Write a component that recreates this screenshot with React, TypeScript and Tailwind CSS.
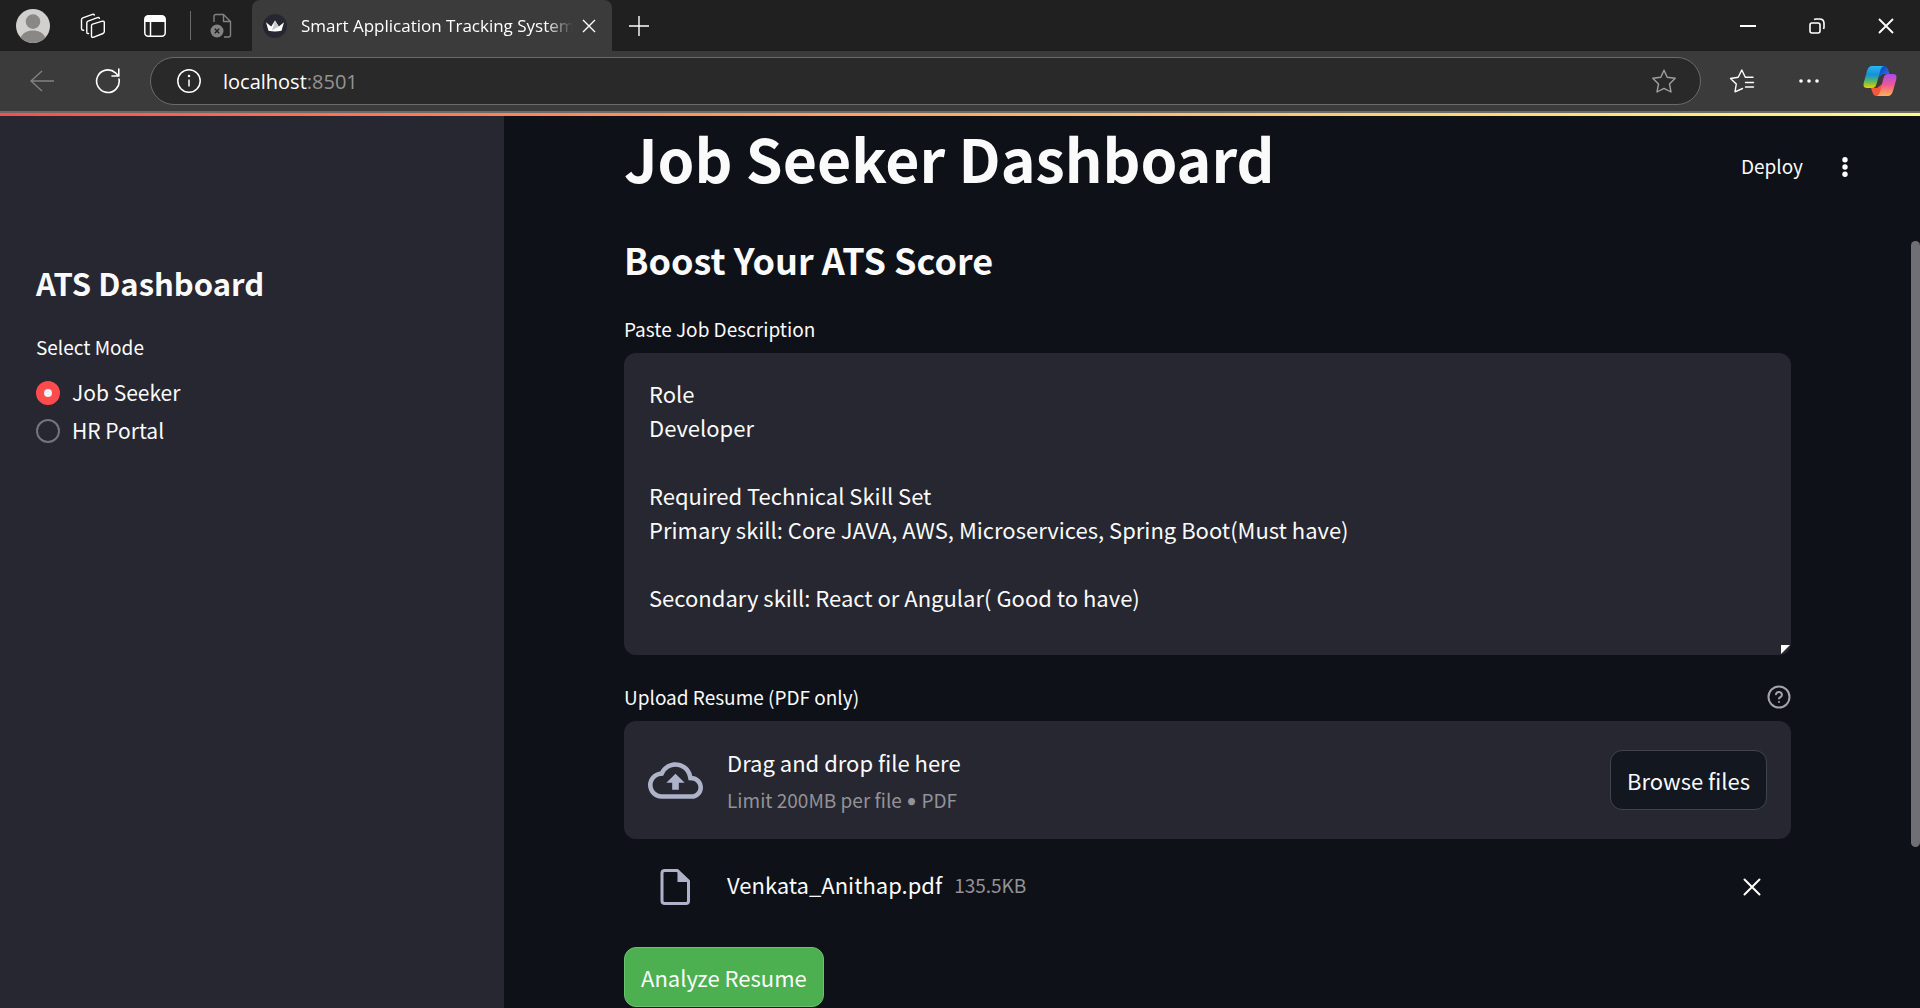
import React from "react";

const ui = "font-['Open_Sans','Noto_Sans',sans-serif]";

function Avatar() {
  return (
    <svg viewBox="0 0 34 34" className="size-[34px]">
      <circle cx="17" cy="17" r="17" fill="#d2d0ce" />
      <circle cx="17" cy="12.600" r="7.300" fill="#8a8886" />
      <path d="M4.500 28.500C7 24 11 21.500 17 21.500S27 24 29.500 28.500A17 17 0 0 1 4.500 28.500Z" fill="#8a8886" />
    </svg>
  );
}

function Workspaces() {
  return (
    <svg viewBox="0 0 26 26" className="size-[26px]" fill="none" stroke="#fff" strokeWidth="1.400" strokeLinejoin="round" strokeLinecap="round">
      <path d="M12.600 11.200 22.400 8.200Q24.300 7.800 24.300 9.600V18.600Q24.300 20 23 20.500L13.200 24.300Q11.500 24.700 11.500 23V12.800Q11.500 11.600 12.600 11.200Z" />
      <path d="M8.600 20.500 7.800 20.600Q6.800 20.400 6.800 19.200V10Q6.800 8.600 8 8.100L17.500 4.600Q19 4.200 19.400 5.400" />
      <path d="M3.700 17.300H3Q1.500 17.200 1.500 15.600V6.800Q1.500 5.400 2.800 4.900L12.500 1.400Q13.800 1.100 14.400 2" />
    </svg>
  );
}

function TabActions() {
  return (
    <svg viewBox="0 0 22 22" className="size-[22px]">
      <rect x=".8" y=".8" width="20.400" height="20.400" rx="3.500" fill="none" stroke="#fff" strokeWidth="1.500" />
      <path d="M.8 7V4Q.8.8 4 .8H18Q21.200.8 21.200 4V7Z" fill="#fff" />
      <path d="M6.500 7V21" stroke="#fff" strokeWidth="1.500" />
    </svg>
  );
}

function DeadPage() {
  return (
    <svg viewBox="0 0 22 26" className="h-[26px] w-[22px]">
      <path d="M4 9V3.500Q4 1.500 6 1.500H13.500L20.500 8.500V22Q20.500 24 18.500 24H14M13.500 1.500V8.500H20.500" fill="none" stroke="#828282" strokeWidth="1.400" strokeLinejoin="round" />
      <circle cx="7" cy="18" r="6.500" fill="#828282" />
      <path d="M4.800 15.800 9.200 20.200M9.200 15.800 4.800 20.200" stroke="#202020" strokeWidth="1.500" />
    </svg>
  );
}

function Crown() {
  return (
    <svg viewBox="0 0 24 24" className="size-6 shrink-0">
      <circle cx="12" cy="12" r="12" fill="#262730" />
      <path d="M3 8.300 8.200 12.400 12 6.500 15.800 12.400 21 8.300 18.500 16.800Q12 18.200 5.500 16.800Z" fill="#fff" />
      <path d="M12 6.500 15.800 12.400 9 16.500Z" fill="#c9c9cc" />
    </svg>
  );
}

function Star() {
  return (
    <svg viewBox="0 0 24 24" className="size-6" fill="none" stroke="#a0a0a0" strokeWidth="1.400" strokeLinejoin="round">
      <path d="M12 1.200 15.200 8.300 23.200 9.300 17.500 15 19 23 12 19.400 5 23 6.500 15 .8 9.300 8.800 8.300Z" />
    </svg>
  );
}

function Favorites() {
  return (
    <svg viewBox="0 0 26 26" className="size-[26px]" fill="none" stroke="#fff" strokeWidth="1.400" strokeLinejoin="round" strokeLinecap="round">
      <path d="M13.500 20.500 6 23.800 7.300 16 1.500 10.500 9.200 9.300 12.800 2 16.300 9.300H24M16.500 14.500H24.500M16.500 19H24.500" />
    </svg>
  );
}

function Copilot() {
  return (
    <svg viewBox="0 0 34 32" className="h-8 w-[34px]">
      <defs>
        <linearGradient id="cpA" x1="0" y1="0" x2="0" y2="1">
          <stop offset="0" stopColor="#2bb4f4" />
          <stop offset=".4" stopColor="#1590d8" />
          <stop offset=".7" stopColor="#5cb860" />
          <stop offset="1" stopColor="#f0d000" />
        </linearGradient>
        <linearGradient id="cpB" x1="0" y1="0" x2="0" y2="1">
          <stop offset="0" stopColor="#a84af0" />
          <stop offset=".5" stopColor="#ef5a90" />
          <stop offset="1" stopColor="#ffb057" />
        </linearGradient>
        <linearGradient id="cpC" x1="0" y1="0" x2="1" y2="1">
          <stop offset="0" stopColor="#0c3bb8" />
          <stop offset="1" stopColor="#2b7cf0" />
        </linearGradient>
      </defs>
      <path d="M16 1H21Q24 1 25 4.500L26.500 9H20L16 12Z" fill="url(#cpC)" />
      <path d="M18 31H14Q10.500 31 9.500 27.500L8 23H14L19 19Z" fill="#f4553b" />
      <path d="M9 1H21Q18.500 1.500 17.500 5L13.500 19Q12.500 23 9 23H4Q-.5 23 .8 17.500L4 6Q5.500 1 9 1Z" fill="url(#cpA)" />
      <path d="M25 9H30Q34.500 9 33.200 14.500L30 26Q28.500 31 25 31H13.500Q16 30.500 17 27L20.500 13Q21.500 9 25 9Z" fill="url(#cpB)" />
    </svg>
  );
}

function TitleBar() {
  return (
    <div className="flex h-[51px] items-stretch bg-[#202020]">
      <div className="flex items-center gap-[38px] pl-4">
        <button aria-label="Profile" className="-mr-2"><Avatar /></button>
        <button aria-label="Workspaces"><Workspaces /></button>
        <button aria-label="Tab actions"><TabActions /></button>
      </div>
      <div className="my-[11px] ml-6 w-px bg-[#6a6a6a]" />
      <button aria-label="Inactive tab" className="ml-[19px] flex items-center"><DeadPage /></button>
      <div className="ml-5 flex w-[360px] items-center rounded-t-lg bg-[#3b3b3b] pr-4 pl-[11px]">
        <Crown />
        <span className={`ml-3.5 shrink-0 text-[17px] whitespace-nowrap text-white [mask-image:linear-gradient(to_right,black_244px,transparent_272px)] ${ui}`}>
          Smart Application Tracking System
        </span>
        <button aria-label="Close tab" className="ml-auto">
          <svg viewBox="0 0 14 14" className="size-3.5" stroke="#fff" strokeWidth="1.400"><path d="M1 1 13 13M13 1 1 13" /></svg>
        </button>
      </div>
      <button aria-label="New tab" className="ml-4">
        <svg viewBox="0 0 22 22" className="size-[22px]" stroke="#fff" strokeWidth="1.400"><path d="M11 1V21M1 11H21" /></svg>
      </button>
      <div className="ml-auto flex items-center gap-[53px] pr-[26px]">
        <button aria-label="Minimize">
          <svg viewBox="0 0 16 16" className="size-4" stroke="#fff" strokeWidth="2"><path d="M0 8H16" /></svg>
        </button>
        <button aria-label="Restore">
          <svg viewBox="0 0 16 16" className="size-4" fill="none" stroke="#fff" strokeWidth="1.600">
            <rect x="1" y="5" width="10" height="10" rx="2" />
            <path d="M5 1.500Q6 1 7 1H10.500Q15 1 15 5.500V9Q15 10 14.500 11" />
          </svg>
        </button>
        <button aria-label="Close window">
          <svg viewBox="0 0 16 16" className="size-4" stroke="#fff" strokeWidth="1.800"><path d="M1 1 15 15M15 1 1 15" /></svg>
        </button>
      </div>
    </div>
  );
}

function AddressBar() {
  return (
    <div className="flex h-[60px] items-center bg-[#3b3b3b] pl-[30px]">
      <button aria-label="Back">
        <svg viewBox="0 0 24 22" className="h-[22px] w-6" fill="none" stroke="#828282" strokeWidth="1.400"><path d="M12 1 1 11 12 21M1 11H24" /></svg>
      </button>
      <button aria-label="Refresh" className="ml-[41px]">
        <svg viewBox="0 0 26 26" className="size-[26px]" fill="none" stroke="#fff" strokeWidth="1.600" strokeLinecap="round">
          <path d="M24 11A11.300 11.300 0 1 1 20.500 4.800L23.500 8M23.800 1V8H17" />
        </svg>
      </button>
      <div className="ml-[29px] flex h-12 flex-1 items-center rounded-full border border-[#6a6a6a] bg-[#292929] pr-6 pl-[26px]">
        <button aria-label="Site information">
          <svg viewBox="0 0 24 24" className="size-6" fill="none" stroke="#fff" strokeWidth="1.500">
            <circle cx="12" cy="12" r="11.200" />
            <path d="M12 10.500V17.500" />
            <circle cx="12" cy="7" r=".5" fill="#fff" />
          </svg>
        </button>
        <span className={`ml-[22px] pt-0.5 text-[20px] text-white ${ui}`}>
          localhost<span className="text-[#949494]">:8501</span>
        </span>
        <button aria-label="Add to favorites" className="ml-auto"><Star /></button>
      </div>
      <div className="flex items-center pr-[23px] pl-7">
        <button aria-label="Favorites"><Favorites /></button>
        <button aria-label="Settings and more" className="ml-11">
          <svg viewBox="0 0 20 4" className="h-1 w-5" fill="#fff"><circle cx="2" cy="2" r="1.800" /><circle cx="10" cy="2" r="1.800" /><circle cx="18" cy="2" r="1.800" /></svg>
        </button>
        <button aria-label="Copilot" className="ml-11"><Copilot /></button>
      </div>
    </div>
  );
}

function ModeOption({ label, checked }: { label: string; checked?: boolean }) {
  return (
    <label className="flex items-center gap-3">
      <input
        type="radio"
        name="mode"
        defaultChecked={checked}
        className="mt-0.5 size-6 appearance-none rounded-full border-2 border-[#74757b] checked:border-8 checked:border-[#ff4b4b] checked:bg-[#f0f2f6]"
      />
      {label}
    </label>
  );
}

function Sidebar() {
  return (
    <aside className="w-[504px] shrink-0 bg-[#262730] px-9 pt-[147px]">
      <h2 className="text-[31px] leading-10 font-semibold">ATS Dashboard</h2>
      <fieldset className="mt-[30px]">
        <legend className="text-[19px] leading-7">Select Mode</legend>
        <div className="mt-3 text-[21px] leading-[38px]">
          <ModeOption label="Job Seeker" checked />
          <ModeOption label="HR Portal" />
        </div>
      </fieldset>
    </aside>
  );
}

const description = `Role
Developer

Required Technical Skill Set
Primary skill: Core JAVA, AWS, Microservices, Spring Boot(Must have)

Secondary skill: React or Angular( Good to have)`;

function Uploader() {
  return (
    <section>
      <div className="mt-7 flex h-7 items-center justify-between text-[19px]">
        <label htmlFor="resume">Upload Resume (PDF only)</label>
        <button aria-label="Help">
          <svg viewBox="0 0 24 24" className="size-6" fill="none" stroke="#a3a4a8" strokeWidth="2" strokeLinecap="round">
            <circle cx="12" cy="12" r="10.500" />
            <path d="M9 9.300A3 3 0 0 1 14.900 10C14.900 12 12 12.600 12 13.600M12 17H12.010" />
          </svg>
        </button>
      </div>
      <div className="mt-2.5 flex h-[118px] items-center rounded-xl bg-[#262730] px-6">
        <svg viewBox="0 0 24 24" className="size-[55px] shrink-0" fill="#afb3c9">
          <path d="M19.350 10.040A7.490 7.490 0 0 0 12 4C9.110 4 6.600 5.640 5.350 8.040A5.994 5.994 0 0 0 0 14c0 3.310 2.690 6 6 6h13c2.760 0 5-2.240 5-5 0-2.640-2.050-4.780-4.650-4.960zM19 18H6c-2.210 0-4-1.790-4-4 0-2.050 1.530-3.760 3.560-3.970l1.070-.11.500-.95A5.469 5.469 0 0 1 12 6c2.620 0 4.880 1.860 5.390 4.430l.3 1.500 1.530.11A2.980 2.980 0 0 1 22 15c0 1.650-1.350 3-3 3zM8 13h2.550v3h2.900v-3H16l-4-4z" />
        </svg>
        <div className="ml-6 pt-[3px]">
          <div className="text-[22px] leading-[38px]">Drag and drop file here</div>
          <div className="text-[19px] leading-[38px] text-[#929297]">
            Limit 200MB per file <span className="font-['Lato',sans-serif]">•</span> PDF
          </div>
        </div>
        <input id="resume" type="file" className="hidden" />
        <button className="ml-auto h-[60px] rounded-xl border border-[#41444c] bg-[#131720] px-4 text-[22px]">Browse files</button>
      </div>
      <div className="mt-3 flex h-[72px] items-center pr-[30px] pl-9">
        <svg viewBox="0 0 30 36" className="h-9 w-[30px] shrink-0" fill="none">
          <path d="M17.500 1.500H5Q2 1.500 2 4V32Q2 34.500 5 34.500H26Q28.500 34.500 28.500 32V12Z" stroke="#afb3c9" strokeWidth="3" strokeLinejoin="round" />
          <path d="M17.500 1V13H29Z" fill="#afb3c9" />
        </svg>
        <div className="ml-[37px] flex items-center gap-3 pb-1.5">
          <span className="text-[22px]">Venkata_Anithap.pdf</span>
          <span className="pt-0.5 text-[19px] text-[#929297]">135.5KB</span>
        </div>
        <button aria-label="Remove file" className="ml-auto">
          <svg viewBox="0 0 18 18" className="size-[18px]" stroke="#fff" strokeWidth="2" strokeLinecap="round"><path d="M1.500 1.500 16.500 16.500M16.500 1.500 1.500 16.500" /></svg>
        </button>
      </div>
    </section>
  );
}

export default function App() {
  return (
    <div className="flex h-screen flex-col overflow-hidden bg-[#0e1117]">
      <header className="shrink-0">
        <TitleBar />
        <AddressBar />
        <div className="h-0.5 bg-[#6a6a6a]" />
      </header>
      <div className="h-[3px] shrink-0 bg-linear-to-r from-[#ff4b4b] to-[#fffd80]" />
      <div className="relative flex min-h-0 flex-1 font-['Noto_Sans_CJK_SC',sans-serif] text-[#fafafa]">
        <Sidebar />
        <main className="min-w-0 flex-1 pr-[129px] pl-[120px]">
          <h1 className="pt-0.5 text-[59px] leading-[80px] font-bold">Job Seeker Dashboard</h1>
          <h2 className="mt-9 text-[36px] leading-[50px] font-semibold">Boost Your ATS Score</h2>
          <label htmlFor="jd" className="mt-[31px] block text-[19px] leading-7">Paste Job Description</label>
          <div className="relative mt-2.5 flex">
            <textarea id="jd" defaultValue={description} className="h-[302px] w-full resize-none overflow-hidden rounded-xl bg-[#262730] px-[25px] py-[23px] text-[22px] leading-[34px] outline-none" />
            <svg viewBox="0 0 9 9" className="absolute right-px bottom-px size-[9px]"><path d="M0 0H9L0 9Z" fill="#fff" /></svg>
          </div>
          <Uploader />
          <button className="mt-6 h-[60px] rounded-xl border border-[#6cc070] bg-[#4caf50] px-4 text-[22px]">Analyze Resume</button>
        </main>
        <div className="absolute top-[30px] right-[72px] flex items-center gap-[39px]">
          <button className="text-[19px] leading-10">Deploy</button>
          <button aria-label="Main menu" className="pt-px">
            <svg viewBox="0 0 6 20" className="h-5 w-1.5" fill="#fff"><circle cx="3" cy="2.700" r="2.700" /><circle cx="3" cy="10" r="2.700" /><circle cx="3" cy="17.300" r="2.700" /></svg>
          </button>
        </div>
        <div className="absolute top-[125px] right-0 h-[606px] w-[9px] rounded-full bg-[#6f7075]" />
      </div>
    </div>
  );
}
